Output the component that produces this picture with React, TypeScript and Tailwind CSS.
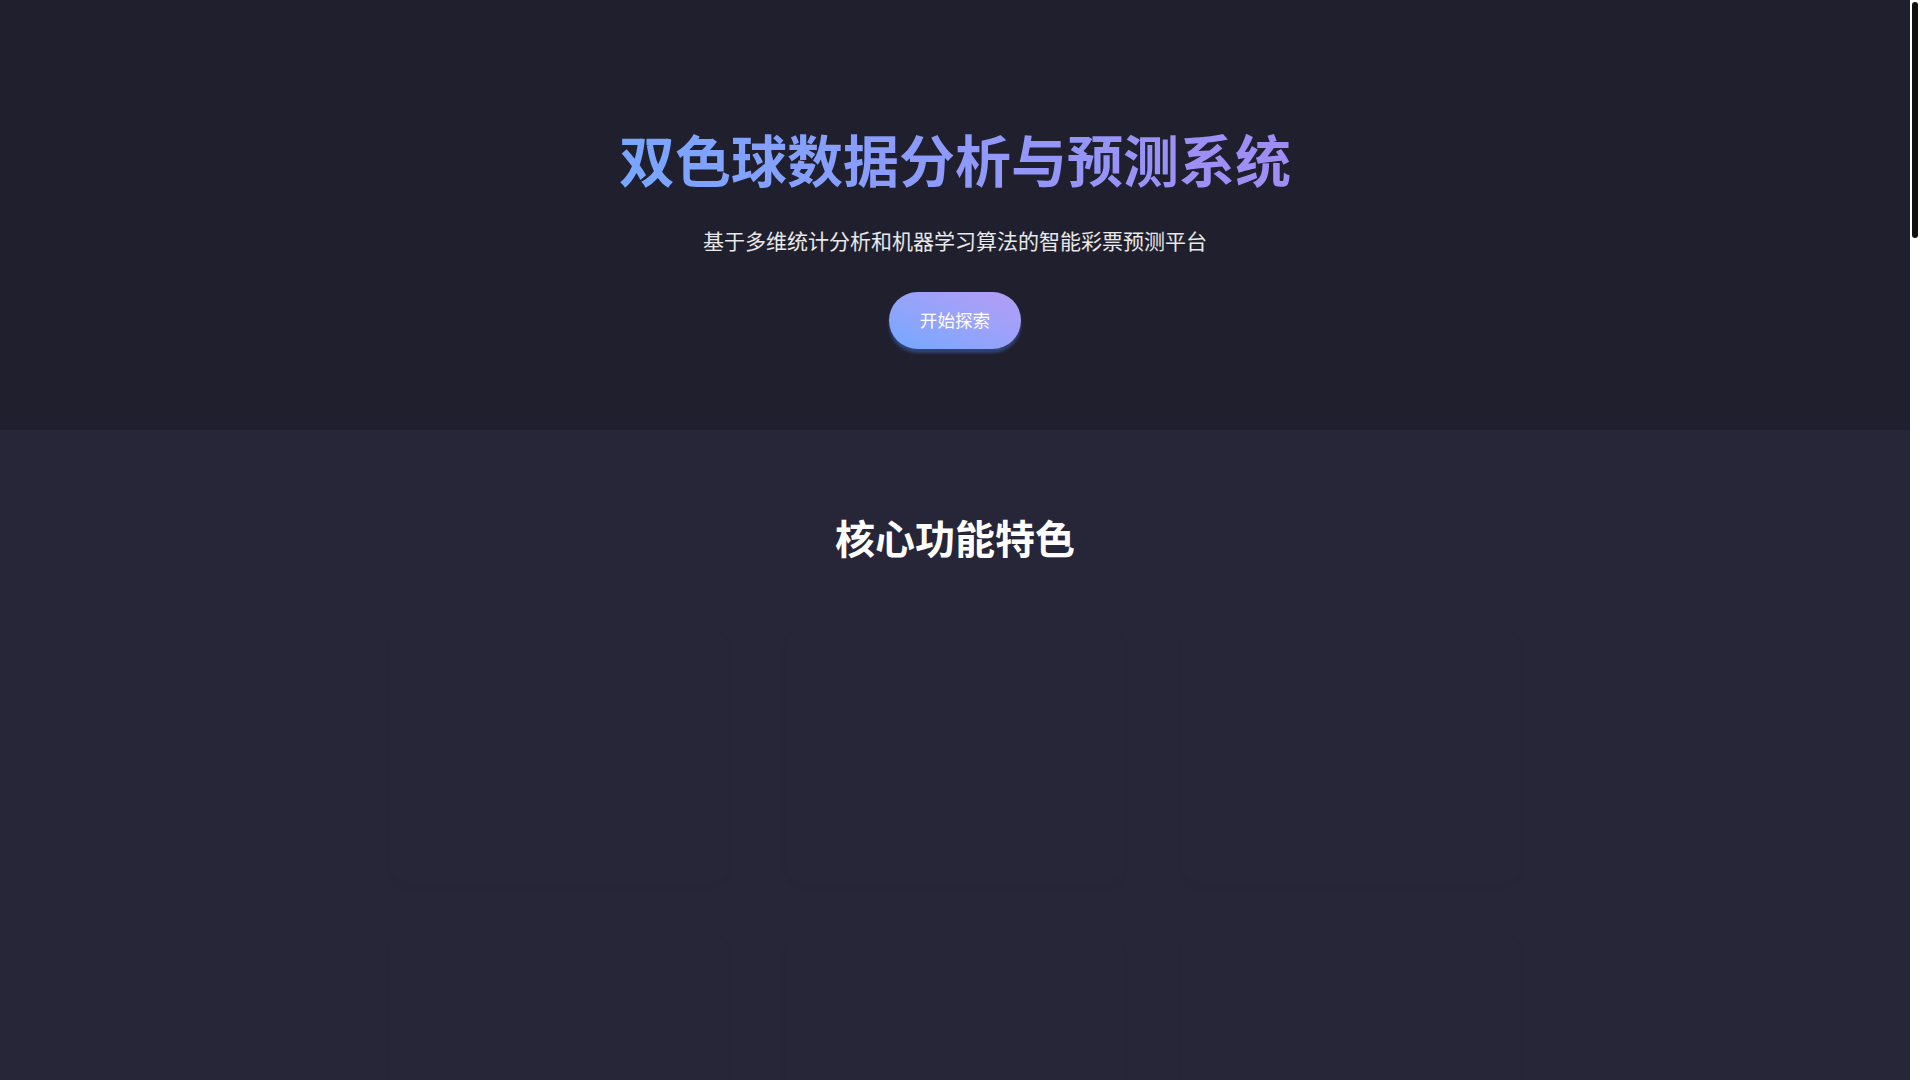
import React from "react";

const font = "font-['Noto_Sans_CJK_SC','Noto_Sans',sans-serif]";

export default function App() {
  const cards = [0, 1, 2, 3, 4, 5];
  return (
    <div className={`${font} flex h-screen overflow-hidden bg-white`}>
      <main className="flex min-w-0 flex-1 flex-col">
        <header className="flex flex-col items-center bg-[#1f1f2e] pt-[124px] pb-[81px]">
          <h1 className="inline-block bg-gradient-to-r from-[#78a6ff] to-[#a08cf5] bg-clip-text text-[56px] font-bold leading-[1.2] text-transparent">
            双色球数据分析与预测系统
          </h1>
          <p className="mt-[33px] text-[21px] leading-[1.6] text-white/90">
            基于多维统计分析和机器学习算法的智能彩票预测平台
          </p>
          <button className="mt-[34px] flex h-[57px] items-center rounded-full bg-gradient-to-tr from-[#72a8ff] to-[#b59cf5] px-[31px] text-[17.6px] leading-none text-white shadow-[0_4px_3px_rgba(70,110,200,0.45)]">
            开始探索
          </button>
        </header>
        <section className="flex flex-1 flex-col items-center bg-[#262638] pt-[83px]">
          <h2 className="text-[40px] font-bold leading-[1.2] text-white">核心功能特色</h2>
          <div className="mt-[68px] grid grid-cols-[repeat(3,338px)] gap-x-[58px] gap-y-[52px]">
            {cards.map((c) => (
              <div
                key={c}
                className="h-[253px] rounded-2xl bg-[#262638] shadow-[0_4px_12px_rgba(0,0,0,0.018)]"
              />
            ))}
          </div>
        </section>
      </main>
      <aside className="flex h-screen w-[10px] shrink-0 flex-col bg-white px-[2px] pt-[2px]">
        <div className="h-[236px] rounded-[3px] bg-[#111111]" />
      </aside>
    </div>
  );
}
